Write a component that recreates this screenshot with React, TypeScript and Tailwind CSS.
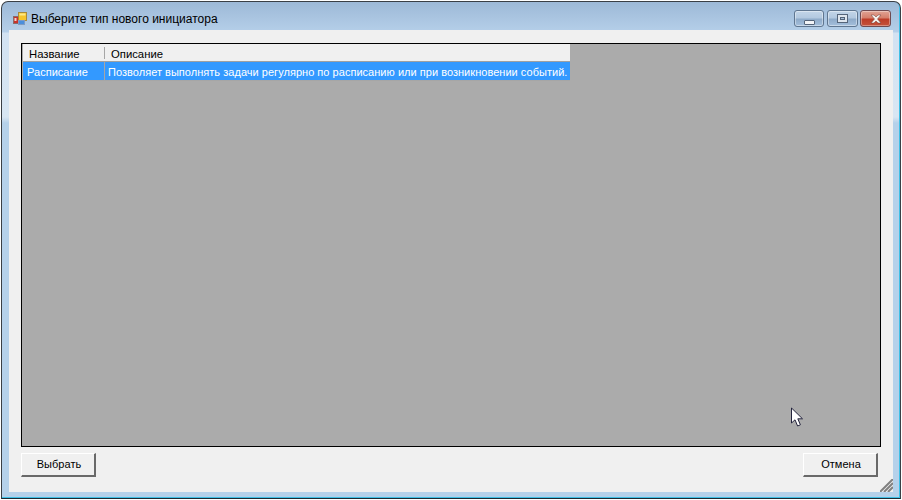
const font = { fontFamily: '"Liberation Sans", Arial, sans-serif' }

function AppIcon() {
  return (
    <svg width="14" height="14" viewBox="0 0 14 14" className="mt-[2px] shrink-0">
      <rect x="0.5" y="4.5" width="5" height="7" fill="#c8322a" stroke="#8a6a6a" />
      <rect x="1.5" y="6" width="2" height="3" fill="#f4d4c8" />
      <rect x="5.5" y="0.5" width="8" height="8" fill="#f7c52c" stroke="#a88a3a" />
      <rect x="6.5" y="1.5" width="6" height="2" fill="#fde98a" />
      <rect x="5.5" y="8.5" width="6" height="4" fill="#4a8fdc" stroke="#7d9cc4" />
    </svg>
  )
}

function CaptionButton({ kind }: { kind: 'min' | 'max' | 'close' }) {
  if (kind === 'close') {
    return (
      <div className="ml-[2px] flex h-[17px] w-[31px] items-center justify-center rounded-[3px] border border-[#6f4a50] bg-[linear-gradient(180deg,#e0a394_0%,#d5806c_45%,#bd3d28_55%,#c4523c_100%)] shadow-[inset_0_0_0_1px_rgba(255,255,255,0.35)]">
        <svg width="14" height="10" viewBox="0 0 14 10">
          <path d="M2 1 L5 1 L7 3 L9 1 L12 1 L8.5 5 L12 9 L9 9 L7 7 L5 9 L2 9 L5.5 5 Z" fill="#f4f1ee" stroke="#6d3a34" strokeWidth="0.5" />
        </svg>
      </div>
    )
  }
  return (
    <div className={`flex h-[17px] items-center justify-center rounded-[3px] border border-[#5f7690] bg-[linear-gradient(180deg,#c3d5e8_0%,#b3c9e0_45%,#8fabc9_55%,#a4bfdc_100%)] shadow-[inset_0_0_0_1px_rgba(255,255,255,0.4)] ${kind === 'min' ? 'w-[30px]' : 'ml-[3px] w-[31px]'}`}>
      {kind === 'min' ? (
        <div className="mt-[7px] h-[5px] w-[11px] rounded-[1px] border border-[#55657a] bg-[#f2f4f7]" />
      ) : (
        <div className="flex h-[9px] w-[11px] items-center justify-center border border-[#55657a] bg-[#dfe6ee]">
          <div className="h-[3px] w-[5px] border border-[#55657a] bg-[#a9bfd8]" />
        </div>
      )}
    </div>
  )
}

function WinButton({ label }: { label: string }) {
  return (
    <button className="flex h-[24px] w-[75px] items-center justify-center border-t border-l border-t-white border-l-white border-r-2 border-b-2 border-r-[#696969] border-b-[#696969] bg-[#f0f0f0] pl-[2px] text-[11px] tracking-[0.03px] text-black">
      {label}
    </button>
  )
}

function Cursor() {
  return (
    <svg width="14" height="21" viewBox="0 0 14 21" className="absolute left-[768px] top-[363px]">
      <path d="M1.5 1 L1.5 16 L5 12.8 L7.6 19 L10.4 17.8 L7.8 11.8 L12.5 11.8 Z" fill="#fff" stroke="#23233c" strokeWidth="1" />
    </svg>
  )
}

export default function App() {
  return (
    <div style={font} className="h-[500px] w-[902px] overflow-hidden bg-white px-[1px] pt-[1px] pb-[1px]">
      <div className="flex h-full flex-col rounded-t-[7px] border border-[#3a3f45] border-b-[#1f2a33] bg-[linear-gradient(180deg,#9db9d7_0px,#b5cfe9_30px,#d2e2f2_31px,#d8e6f3_115px,#b5d1ea_121px,#b5d1ea_100%)] shadow-[inset_-1px_-1px_0_#3fc0e6]">
        <div className="flex h-[28px] shrink-0 items-start pl-[11px] pr-[9px] pt-[8px]">
          <AppIcon />
          <span className="ml-[4px] mt-[2px] text-[12px] leading-[14px] text-black">Выберите тип нового инициатора</span>
          <div className="ml-auto flex">
            <CaptionButton kind="min" />
            <CaptionButton kind="max" />
            <CaptionButton kind="close" />
          </div>
        </div>
        <div className="flex min-h-0 flex-1 flex-col px-[7px] pb-[6px]">
          <div className="relative flex min-h-0 flex-1 flex-col bg-[#f0f0f0] px-[12px] pt-[13px]">
            <div className="relative h-[404px] w-[860px] border border-black bg-[#ababab] pl-[1px]">
              <div className="w-[547px]">
                <div className="flex h-[18px] border-b border-[#a0a0a0] bg-[#f0f0f0] pt-[3px] text-[11.3px] text-black">
                  <div className="flex w-[81px] shrink-0 items-center pl-[6px]">Название</div>
                  <div className="mb-[2px] w-px shrink-0 bg-[#a6a6a6]" />
                  <div className="flex flex-1 items-center pl-[6px]">Описание</div>
                </div>
                <div className="flex h-[19px] border-b border-[#a6a6a6] bg-[#3399ff] text-[11px] tracking-[0.03px] text-white">
                  <div className="flex w-[81px] shrink-0 items-center pl-[4px] pt-[2px]">Расписание</div>
                  <div className="w-px shrink-0 bg-[#a6a6a6]" />
                  <div className="flex flex-1 items-center whitespace-nowrap pl-[3px] pt-[2px]">Позволяет выполнять задачи регулярно по расписанию или при возникновении событий.</div>
                </div>
              </div>
              <Cursor />
            </div>
            <div className="mt-[6px] flex justify-between pr-[3px]">
              <WinButton label="Выбрать" />
              <WinButton label="Отмена" />
            </div>
            <svg width="13" height="13" viewBox="0 0 13 13" className="absolute right-0 bottom-0">
              <path d="M0 13 L13 0 M4 13 L13 4 M8 13 L13 8" stroke="#808080" strokeWidth="2" />
            </svg>
          </div>
        </div>
      </div>
    </div>
  )
}
